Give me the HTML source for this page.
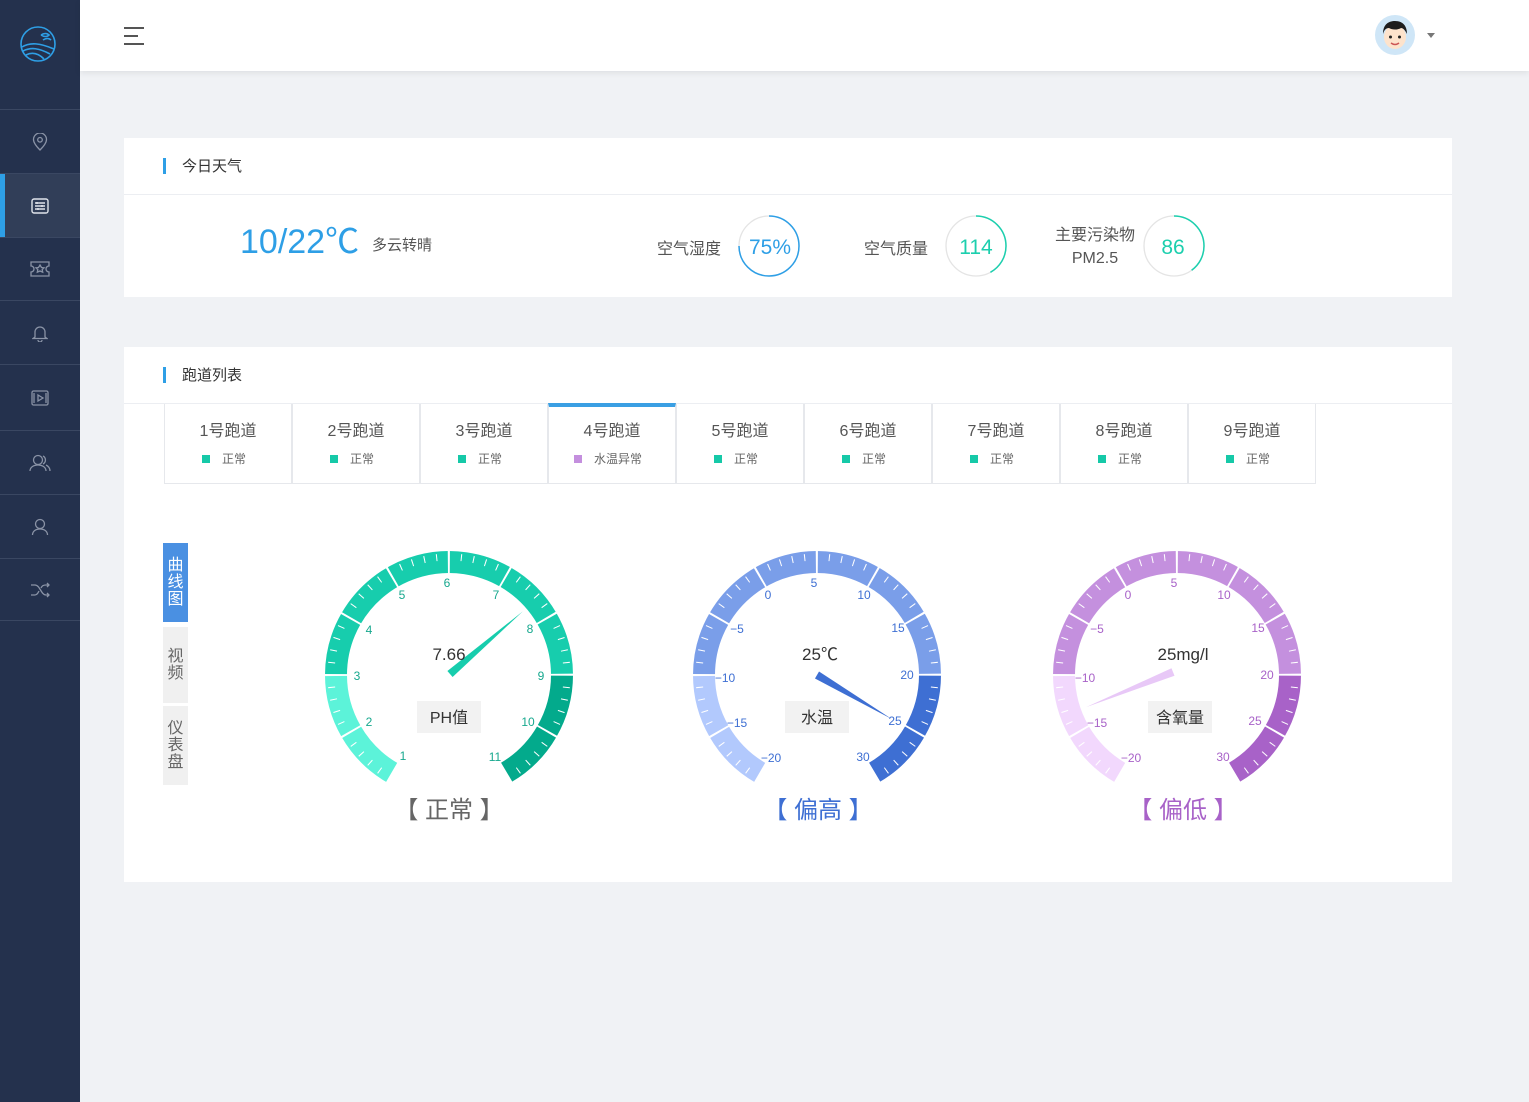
<!DOCTYPE html>
<html><head><meta charset="utf-8"><style>
*{margin:0;padding:0;box-sizing:border-box}
body{width:1529px;height:1102px;background:#f0f2f5;font-family:"Liberation Sans","Noto Sans CJK SC",sans-serif;position:relative;overflow:hidden;color:#333}
.side{position:absolute;left:0;top:0;width:80px;height:1102px;background:#24314d}
.si{position:absolute;left:0;width:80px;border-top:1px solid #3a4762;display:flex;align-items:center;justify-content:center}
.hdr{position:absolute;left:80px;top:0;width:1449px;height:71px;background:#fff;box-shadow:0 2px 6px rgba(0,0,0,.08)}
.card{position:absolute;left:124px;width:1328px;background:#fff}
.ttl{height:57px;border-bottom:1px solid #eceef2;position:relative;font-size:15px;line-height:57px;padding-left:58px;color:#333}
.ttl:before{content:"";position:absolute;left:39px;top:20px;width:3px;height:16px;background:#2e9fe6}
.tab{position:absolute;top:404px;width:128px;height:80px;border:1px solid #e6e8ec;border-top:none;text-align:center}
.tab b{display:block;font-weight:normal;font-size:16px;color:#555;margin-top:13px}
.tab i{font-style:normal;font-size:12px;color:#666;display:block;margin-top:9px;padding-right:8px}
.tab i:before{content:"";display:inline-block;width:8px;height:8px;background:#16c9a8;margin-right:12px;vertical-align:0}
.tab i.p:before{background:#c48fde}
.vt{position:absolute;left:163px;width:25px;font-size:16px;line-height:17px;text-align:center;display:flex;flex-direction:column;justify-content:center}
.g{position:absolute;top:535px;width:280px;height:280px}
.st{position:absolute;top:790px;width:200px;text-align:center;font-size:24px}
.rc{position:absolute;top:215px;width:62px;height:62px}
.lb{position:absolute;font-size:16px;color:#555}
</style></head><body>
<div class="side">
<svg style="position:absolute;left:19px;top:25px" width="38" height="38" viewBox="0 0 38 38" fill="none" stroke="#2e9fe6" stroke-width="1.6"><circle cx="19" cy="19" r="17"/><path d="M3 22c8-5 18-4 32 2M4 26c8-4 16-3 27 3M7 30c6-3 12-2 18 4M22 10c3-2 6-2 8 0-2 2-5 2-8 0M24 15c3-2 6-2 8 0"/></svg>
<div class="si" style="top:109px;height:64px"><svg width="16" height="18" viewBox="0 0 16 18" fill="none" stroke="#8a93a6" stroke-width="1.3"><path d="M8 17C3 12 1.5 9 1.5 6.5a6.5 6.5 0 0113 0C14.5 9 13 12 8 17z"/><circle cx="8" cy="6.8" r="2.3"/></svg></div>
<div class="si" style="top:173px;height:64px;background:#313e58"><div style="position:absolute;left:0;top:0;width:5px;height:64px;background:#2e9fe6"></div><svg width="18" height="16" viewBox="0 0 18 16" fill="none" stroke="#dfe3ea" stroke-width="1.4"><rect x="1" y="1" width="16" height="14" rx="2"/><path d="M4 5h10M4 8h10M4 11h10M6 4v2M11 7v2M7 10v2"/></svg></div>
<div class="si" style="top:237px;height:63px"><svg width="20" height="16" viewBox="0 0 20 16" fill="none" stroke="#8a93a6" stroke-width="1.3"><path d="M1 1h18v4a3 3 0 000 6v4H1v-4a3 3 0 000-6z"/><path d="M10 4l1.5 2.5 2.5.3-1.8 1.8.5 2.6L10 10l-2.7 1.2.5-2.6L6 6.8l2.5-.3z"/></svg></div>
<div class="si" style="top:300px;height:64px"><svg width="16" height="18" viewBox="0 0 16 18" fill="none" stroke="#8a93a6" stroke-width="1.3"><path d="M3 13V8a5 5 0 0110 0v5l2 1.5H1z"/><path d="M6 16a2 2 0 004 0"/></svg></div>
<div class="si" style="top:364px;height:66px"><svg width="18" height="16" viewBox="0 0 18 16" fill="none" stroke="#8a93a6" stroke-width="1.3"><rect x="1" y="1" width="16" height="14" rx="1.5"/><path d="M7 5l5 3-5 3z M3 3v10M15 3v10"/></svg></div>
<div class="si" style="top:430px;height:64px"><svg width="22" height="18" viewBox="0 0 22 18" fill="none" stroke="#8a93a6" stroke-width="1.3"><circle cx="9" cy="6" r="4.5"/><path d="M1 17c0-4 4-6 8-6s8 2 8 6M14 2a4.5 4.5 0 010 8M17 11c2 1 4 3 4 6"/></svg></div>
<div class="si" style="top:494px;height:64px"><svg width="18" height="18" viewBox="0 0 18 18" fill="none" stroke="#8a93a6" stroke-width="1.3"><circle cx="9" cy="6" r="4.5"/><path d="M1.5 17c0-4 3.5-6 7.5-6s7.5 2 7.5 6"/></svg></div>
<div class="si" style="top:558px;height:63px;border-bottom:1px solid #3a4762"><svg width="20" height="16" viewBox="0 0 20 16" fill="none" stroke="#8a93a6" stroke-width="1.3"><path d="M1 3h4c5 0 6 10 11 10h3M1 13h4c2 0 3-2 4-4M11 6c1-2 2-3 5-3h3M17 1l2 2-2 2M17 11l2 2-2 2"/></svg></div>
</div>
<div class="hdr">
<div style="position:absolute;left:44px;top:27px;width:20px;height:2px;background:#555"></div>
<div style="position:absolute;left:44px;top:35px;width:14px;height:2px;background:#555"></div>
<div style="position:absolute;left:44px;top:43px;width:20px;height:2px;background:#555"></div>
<svg style="position:absolute;left:1294px;top:14px" width="42" height="42" viewBox="0 0 42 42"><circle cx="21" cy="21" r="20" fill="#cfe6f7"/><ellipse cx="21" cy="23" rx="11" ry="12" fill="#fde3cc"/><path d="M9 20c0-10 6-13 12-13s12 3 12 13c-2-4-4-6-6-6-3 2-9 2-12 0-3 0-5 2-6 6z" fill="#1d1d1d"/><circle cx="16.5" cy="23" r="1.5" fill="#222"/><circle cx="25.5" cy="23" r="1.5" fill="#222"/><path d="M17 29q4 3 8 0" stroke="#c55" stroke-width="1.5" fill="none"/></svg>
<div style="position:absolute;left:1347px;top:33px;border:4px solid transparent;border-top:5px solid #777"></div>
</div>

<div class="card" style="top:138px;height:159px">
<div class="ttl">今日天气</div>
<div style="position:absolute;left:116px;top:84px;font-size:34px;color:#2e9fe6;line-height:40px">10/22℃</div>
<div style="position:absolute;left:248px;top:96px;font-size:15px;color:#555">多云转晴</div>
</div>
<div class="lb" style="left:657px;top:235px">空气湿度</div>
<div class="lb" style="left:864px;top:235px">空气质量</div>
<div class="lb" style="left:1055px;top:224px;text-align:center;line-height:23px">主要污染物<br>PM2.5</div>
<svg class="rc" style="left:738px" viewBox="0 0 62 62"><circle cx="31" cy="31" r="30" fill="none" stroke="#e4e4e4" stroke-width="1.3"/><circle cx="31" cy="31" r="30" fill="none" stroke="#2e9fe6" stroke-width="1.5" pathLength="100" stroke-dasharray="75 25" transform="rotate(-90 31 31)"/><text x="32" y="39" text-anchor="middle" font-size="21" fill="#2e9fe6" font-family="Liberation Sans">75%</text></svg>
<svg class="rc" style="left:945px" viewBox="0 0 62 62"><circle cx="31" cy="31" r="30" fill="none" stroke="#e4e4e4" stroke-width="1.3"/><circle cx="31" cy="31" r="30" fill="none" stroke="#1ccfae" stroke-width="1.5" pathLength="100" stroke-dasharray="42 58" transform="rotate(-90 31 31)"/><text x="31" y="39" text-anchor="middle" font-size="21" fill="#1ccfae" font-family="Liberation Sans">114</text></svg>
<svg class="rc" style="left:1143px" viewBox="0 0 62 62"><circle cx="31" cy="31" r="30" fill="none" stroke="#e4e4e4" stroke-width="1.3"/><circle cx="31" cy="31" r="30" fill="none" stroke="#1ccfae" stroke-width="1.5" pathLength="100" stroke-dasharray="40 60" transform="rotate(-90 31 31)"/><text x="30" y="39" text-anchor="middle" font-size="21" fill="#1ccfae" font-family="Liberation Sans">86</text></svg>

<div class="card" style="top:347px;height:535px">
<div class="ttl">跑道列表</div>
</div>
<div class="tab" style="left:164px"><b>1号跑道</b><i>正常</i></div>
<div class="tab" style="left:292px"><b>2号跑道</b><i>正常</i></div>
<div class="tab" style="left:420px"><b>3号跑道</b><i>正常</i></div>
<div class="tab" style="left:548px;border-top:4px solid #3a9fe3;top:403px;height:81px"><b style="margin-top:10px">4号跑道</b><i class="p">水温异常</i></div>
<div class="tab" style="left:676px"><b>5号跑道</b><i>正常</i></div>
<div class="tab" style="left:804px"><b>6号跑道</b><i>正常</i></div>
<div class="tab" style="left:932px"><b>7号跑道</b><i>正常</i></div>
<div class="tab" style="left:1060px"><b>8号跑道</b><i>正常</i></div>
<div class="tab" style="left:1188px"><b>9号跑道</b><i>正常</i></div>

<div class="vt" style="top:543px;height:79px;background:#4a90e2;color:#fff">曲<br>线<br>图</div>
<div class="vt" style="top:627px;height:76px;background:#f0f0f0;color:#666">视<br>频</div>
<div class="vt" style="top:706px;height:79px;background:#f0f0f0;color:#666">仪<br>表<br>盘</div>

<svg class="g" style="left:309px" viewBox="0 0 280 280" font-family="Liberation Sans" font-size="12">
<g transform="rotate(120 140 140)" fill="none" stroke-width="22">
<circle cx="140" cy="140" r="113" pathLength="360" stroke="#5cf3d9" stroke-dasharray="60 300"/>
<circle cx="140" cy="140" r="113" pathLength="360" stroke="#17cdad" stroke-dasharray="180 180" stroke-dashoffset="-60"/>
<circle cx="140" cy="140" r="113" pathLength="360" stroke="#03aa8c" stroke-dasharray="60 300" stroke-dashoffset="-240"/>
<circle cx="140" cy="140" r="113" pathLength="360" stroke="#fff" stroke-width="24" stroke-dasharray="1 29" stroke-dashoffset="0.5"/>
<circle cx="140" cy="140" r="118" pathLength="360" stroke="#fff" stroke-width="7" stroke-dasharray="0.5 5.5" stroke-dashoffset="0.25"/>
</g>
<g fill="#17a88e" text-anchor="middle" dominant-baseline="central">
<text x="94" y="221">1</text><text x="60" y="187">2</text><text x="48" y="141">3</text><text x="60" y="95">4</text><text x="93" y="60">5</text><text x="138" y="48">6</text><text x="187" y="60">7</text><text x="221" y="94">8</text><text x="232" y="141">9</text><text x="219" y="187">10</text><text x="186" y="222">11</text>
</g>
<polygon points="0,-4 96,0 0,4" fill="#17cdad" transform="translate(141 139) rotate(-40.7)"/>
<text x="140" y="125" text-anchor="middle" font-size="17" fill="#333">7.66</text>
<rect x="108" y="166" width="64" height="32" fill="#f2f2f2"/>
<text x="140" y="188" text-anchor="middle" font-size="16" fill="#333" font-family="Liberation Sans,Noto Sans CJK SC,sans-serif">PH值</text>
</svg>
<div class="st" style="left:349px;color:#666">【 正常 】</div>

<svg class="g" style="left:677px" viewBox="0 0 280 280" font-family="Liberation Sans" font-size="12">
<g transform="rotate(120 140 140)" fill="none" stroke-width="22">
<circle cx="140" cy="140" r="113" pathLength="360" stroke="#b2c9fd" stroke-dasharray="60 300"/>
<circle cx="140" cy="140" r="113" pathLength="360" stroke="#7a9ee9" stroke-dasharray="180 180" stroke-dashoffset="-60"/>
<circle cx="140" cy="140" r="113" pathLength="360" stroke="#3e6fd3" stroke-dasharray="60 300" stroke-dashoffset="-240"/>
<circle cx="140" cy="140" r="113" pathLength="360" stroke="#fff" stroke-width="24" stroke-dasharray="1 29" stroke-dashoffset="0.5"/>
<circle cx="140" cy="140" r="118" pathLength="360" stroke="#fff" stroke-width="7" stroke-dasharray="0.5 5.5" stroke-dashoffset="0.25"/>
</g>
<g fill="#3e6fd3" text-anchor="middle" dominant-baseline="central">
<text x="94" y="223">−20</text><text x="60" y="188">−15</text><text x="48" y="143">−10</text><text x="60" y="94">−5</text><text x="91" y="60">0</text><text x="137" y="48">5</text><text x="187" y="60">10</text><text x="221" y="93">15</text><text x="230" y="140">20</text><text x="218" y="186">25</text><text x="186" y="222">30</text>
</g>
<polygon points="0,-4 86,0 0,4" fill="#3e6fd3" transform="translate(140 140) rotate(30.5)"/>
<text x="143" y="125" text-anchor="middle" font-size="17" fill="#333" font-family="Liberation Sans,Noto Sans CJK SC,sans-serif">25℃</text>
<rect x="108" y="166" width="64" height="32" fill="#f2f2f2"/>
<text x="140" y="188" text-anchor="middle" font-size="16" fill="#333" font-family="Liberation Sans,Noto Sans CJK SC,sans-serif">水温</text>
</svg>
<div class="st" style="left:718px;color:#3e6fd3">【 偏高 】</div>

<svg class="g" style="left:1037px" viewBox="0 0 280 280" font-family="Liberation Sans" font-size="12">
<g transform="rotate(120 140 140)" fill="none" stroke-width="22">
<circle cx="140" cy="140" r="113" pathLength="360" stroke="#f2d8fd" stroke-dasharray="60 300"/>
<circle cx="140" cy="140" r="113" pathLength="360" stroke="#c490de" stroke-dasharray="180 180" stroke-dashoffset="-60"/>
<circle cx="140" cy="140" r="113" pathLength="360" stroke="#a862c8" stroke-dasharray="60 300" stroke-dashoffset="-240"/>
<circle cx="140" cy="140" r="113" pathLength="360" stroke="#fff" stroke-width="24" stroke-dasharray="1 29" stroke-dashoffset="0.5"/>
<circle cx="140" cy="140" r="118" pathLength="360" stroke="#fff" stroke-width="7" stroke-dasharray="0.5 5.5" stroke-dashoffset="0.25"/>
</g>
<g fill="#a862c8" text-anchor="middle" dominant-baseline="central">
<text x="94" y="223">−20</text><text x="60" y="188">−15</text><text x="48" y="143">−10</text><text x="60" y="94">−5</text><text x="91" y="60">0</text><text x="137" y="48">5</text><text x="187" y="60">10</text><text x="221" y="93">15</text><text x="230" y="140">20</text><text x="218" y="186">25</text><text x="186" y="222">30</text>
</g>
<polygon points="0,-4 94,0 0,4" fill="#e8c8f7" transform="translate(136 137) rotate(158)"/>
<text x="146" y="125" text-anchor="middle" font-size="17" fill="#333">25mg/l</text>
<rect x="111" y="166" width="64" height="32" fill="#f2f2f2"/>
<text x="143" y="188" text-anchor="middle" font-size="16" fill="#333" font-family="Liberation Sans,Noto Sans CJK SC,sans-serif">含氧量</text>
</svg>
<div class="st" style="left:1083px;color:#a862c8">【 偏低 】</div>
</body></html>
